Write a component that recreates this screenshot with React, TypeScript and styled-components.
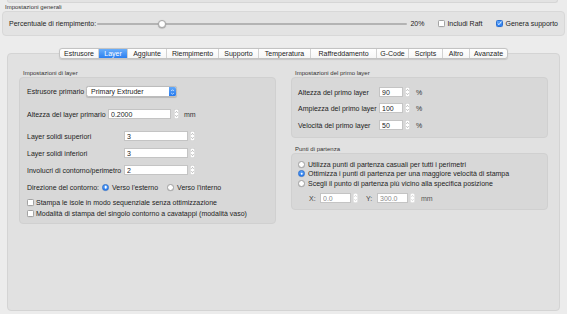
import React from 'react'
import styled, { createGlobalStyle } from 'styled-components'

const GlobalStyle = createGlobalStyle`
  html, body {
    margin: 0;
    padding: 0;
    background: #ececec;
  }
  body {
    font-family: 'Liberation Sans', Arial, sans-serif;
  }
`

const Window = styled.div`
  width: 567px;
  height: 314px;
  display: flex;
  flex-direction: column;
  background: #ececec;
  color: #1d1d1d;
  font-size: 7px;
  line-height: 9px;
  overflow: hidden;
`

const PrevGroupEdge = styled.div`
  height: 2px;
  margin: 0 9px 0 7px;
  background: #e3e3e3;
  border: 1px solid #d6d6d6;
  border-top: none;
  border-radius: 0 0 3px 3px;
`

const SectionTitle = styled.div<{ $mt?: number }>`
  font-size: 6px;
  line-height: 7px;
  height: 7px;
  margin: ${p => p.$mt ?? 1}px 0 0 5px;
  color: #333;
  white-space: nowrap;
`

const GeneralBox = styled.div`
  height: 25px;
  box-sizing: border-box;
  margin: 0 2px;
  display: flex;
  align-items: center;
  padding: 0 6px;
  background: #e3e3e3;
  border: 1px solid #d8d8d8;
  border-radius: 4px;
`

const Text = styled.span<{ $ml?: number; $muted?: boolean }>`
  margin-left: ${p => p.$ml ?? 0}px;
  white-space: nowrap;
  color: ${p => (p.$muted ? '#555' : 'inherit')};
`

const Track = styled.div`
  position: relative;
  width: 315px;
  height: 2px;
  margin-left: 1px;
  background: #b3b3b3;
  border-radius: 1px;
`

const Thumb = styled.div<{ $pct: number }>`
  position: absolute;
  top: 50%;
  left: calc(4px + ${p => p.$pct / 100} * (100% - 8px));
  width: 8px;
  height: 8px;
  box-sizing: border-box;
  border-radius: 50%;
  background: #fff;
  border: 0.5px solid #a6a6a6;
  box-shadow: 0 0.5px 1px rgba(0, 0, 0, 0.3);
  transform: translate(-50%, -50%);
`

const CheckItem = styled.label<{ $ml?: number }>`
  display: flex;
  align-items: center;
  gap: 2px;
  margin-left: ${p => p.$ml ?? 0}px;
  white-space: nowrap;
`

const Box = styled.span<{ $on?: boolean }>`
  display: inline-flex;
  align-items: center;
  justify-content: center;
  width: 7px;
  height: 7px;
  box-sizing: border-box;
  border-radius: 1.5px;
  background: ${p => (p.$on ? 'linear-gradient(#5ba3f8, #2a7cf0)' : '#fff')};
  border: 0.5px solid ${p => (p.$on ? '#2a6fd0' : '#a3a3a3')};
  box-shadow: 0 0.3px 0.6px rgba(0, 0, 0, 0.15);
  flex-shrink: 0;
`

const TabBar = styled.div`
  align-self: center;
  display: flex;
  position: relative;
  z-index: 1;
  height: 9px;
  margin: 12px 0 -6px;
  border: 1px solid #c3c3c3;
  border-radius: 3px;
  background: linear-gradient(#ffffff, #f6f6f6);
  box-shadow: 0 0.5px 1px rgba(0, 0, 0, 0.12);
  overflow: hidden;
`

const Tab = styled.div<{ $w: number; $active?: boolean }>`
  width: ${p => p.$w}px;
  box-sizing: border-box;
  text-align: center;
  line-height: 9px;
  white-space: nowrap;
  color: ${p => (p.$active ? '#fff' : '#1d1d1d')};
  background: ${p => (p.$active ? 'linear-gradient(#6aaefa, #2b7ff1)' : 'transparent')};
  & + & {
    border-left: 1px solid #d2d2d2;
  }
`

const Panel = styled.div`
  flex: 1;
  margin: 0 7px 3px;
  padding: 16px 11px 0;
  display: grid;
  grid-template-columns: 257px 257px;
  column-gap: 15px;
  align-items: start;
  background: #e1e1e1;
  border: 1px solid #d4d4d4;
  border-radius: 4px;
`

const Column = styled.div`
  display: flex;
  flex-direction: column;
`

const GroupTitle = styled.div<{ $mt?: number }>`
  font-size: 6px;
  line-height: 7px;
  height: 7px;
  margin: ${p => p.$mt ?? 0}px 0 0 4px;
  color: #333;
  white-space: nowrap;
`

const GroupBox = styled.div<{ $pt: number; $pb: number }>`
  display: flex;
  flex-direction: column;
  padding: ${p => p.$pt}px 0 ${p => p.$pb}px 6px;
  background: #d8d8d8;
  border: 1px solid #d0d0d0;
  border-radius: 4px;
`

const Row = styled.div<{ $h?: number; $mt?: number; $ml?: number }>`
  display: flex;
  align-items: center;
  height: ${p => p.$h ?? 10}px;
  margin-top: ${p => p.$mt ?? 0}px;
  margin-left: ${p => p.$ml ?? 0}px;
`

const FieldLabel = styled.span<{ $w?: number; $muted?: boolean }>`
  flex-shrink: 0;
  width: ${p => (p.$w ? `${p.$w}px` : 'auto')};
  white-space: nowrap;
  color: ${p => (p.$muted ? '#444' : 'inherit')};
`

const Field = styled.input<{ $w: number; $muted?: boolean }>`
  width: ${p => p.$w}px;
  height: 10px;
  box-sizing: border-box;
  margin: 0;
  padding: 0 2px;
  font: inherit;
  line-height: 8px;
  color: ${p => (p.$muted ? '#8a8a8a' : '#1d1d1d')};
  background: #fff;
  border: 0.5px solid #c4c4c4;
  outline: none;
  flex-shrink: 0;
`

const SelectBox = styled.div`
  display: flex;
  width: 91px;
  height: 11px;
  box-sizing: border-box;
  background: #fff;
  border: 0.5px solid #bcbcbc;
  border-radius: 2.5px;
  box-shadow: 0 0.5px 0.8px rgba(0, 0, 0, 0.15);
  overflow: hidden;
`

const SelectValue = styled.span`
  flex: 1;
  padding-left: 4px;
  line-height: 10px;
  white-space: nowrap;
`

const SelectCap = styled.span`
  display: flex;
  align-items: center;
  justify-content: center;
  width: 7px;
  background: linear-gradient(#63a9f9, #2479ef);
`

const StepWrap = styled.span<{ $ml?: number }>`
  display: inline-flex;
  margin-left: ${p => p.$ml ?? 2}px;
  flex-shrink: 0;
`

const Unit = styled.span<{ $ml: number; $muted?: boolean }>`
  margin-left: ${p => p.$ml}px;
  color: ${p => (p.$muted ? '#555' : '#333')};
  white-space: nowrap;
`

const Radio = styled.span<{ $on?: boolean }>`
  position: relative;
  width: 7px;
  height: 7px;
  box-sizing: border-box;
  border-radius: 50%;
  flex-shrink: 0;
  background: ${p => (p.$on ? 'linear-gradient(#5ba3f8, #2a7cf0)' : '#fff')};
  border: 0.5px solid ${p => (p.$on ? '#2a6fd0' : '#a3a3a3')};
  box-shadow: 0 0.3px 0.6px rgba(0, 0, 0, 0.15);
  &::after {
    content: '';
    display: ${p => (p.$on ? 'block' : 'none')};
    position: absolute;
    left: 50%;
    top: 50%;
    width: 2.6px;
    height: 2.6px;
    border-radius: 50%;
    background: #fff;
    transform: translate(-50%, -50%);
  }
`

const RadioItem = styled.span<{ $ml?: number }>`
  display: flex;
  align-items: center;
  gap: 3px;
  margin-left: ${p => p.$ml ?? 0}px;
  white-space: nowrap;
`

const Stepper = ({ muted }: { muted?: boolean }) => (
  <svg width="5" height="10" viewBox="0 0 5 10">
    <rect x="0.25" y="0.25" width="4.5" height="9.5" rx="1.6" fill="#fff" stroke={muted ? '#cfcfcf' : '#bdbdbd'} strokeWidth="0.5" />
    <path d="M1.5 3.6 L2.5 2.6 L3.5 3.6" fill="none" stroke={muted ? '#aaa' : '#666'} strokeWidth="0.6" />
    <path d="M1.5 6.4 L2.5 7.4 L3.5 6.4" fill="none" stroke={muted ? '#aaa' : '#666'} strokeWidth="0.6" />
  </svg>
)

const CheckMark = () => (
  <svg width="5" height="5" viewBox="0 0 5 5">
    <path d="M0.9 2.6 L2 3.7 L4.1 1" fill="none" stroke="#fff" strokeWidth="0.9" strokeLinecap="round" strokeLinejoin="round" />
  </svg>
)

const tabs = [
  { name: 'Estrusore', w: 38 },
  { name: 'Layer', w: 29, active: true },
  { name: 'Aggiunte', w: 39 },
  { name: 'Riempimento', w: 52 },
  { name: 'Supporto', w: 40 },
  { name: 'Temperatura', w: 52 },
  { name: 'Raffreddamento', w: 66 },
  { name: 'G-Code', w: 32 },
  { name: 'Scripts', w: 34 },
  { name: 'Altro', w: 27 },
  { name: 'Avanzate', w: 38 },
]

const firstLayer = [
  { label: 'Altezza del primo layer', value: '90', mt: 0 },
  { label: 'Ampiezza del primo layer', value: '100', mt: 6 },
  { label: 'Velocità del primo layer', value: '50', mt: 7 },
]

const seamOptions = [
  'Utilizza punti di partenza casuali per tutti i perimetri',
  'Ottimizza i punti di partenza per una maggiore velocità di stampa',
  'Scegli il punto di partenza più vicino alla specifica posizione',
]

const App: React.FC = () => {
  return (
    <>
      <GlobalStyle />
      <Window>
        <PrevGroupEdge />
        <SectionTitle>Impostazioni generali</SectionTitle>
        <GeneralBox>
          <Text>Percentuale di riempimento:</Text>
          <Track>
            <Thumb $pct={20} />
          </Track>
          <Text $ml={3}>20%</Text>
          <CheckItem $ml={14}>
            <Box />
            <span>Includi Raft</span>
          </CheckItem>
          <CheckItem $ml={14}>
            <Box $on>
              <CheckMark />
            </Box>
            <span>Genera supporto</span>
          </CheckItem>
        </GeneralBox>

        <TabBar>
          {tabs.map(t => (
            <Tab key={t.name} $w={t.w} $active={t.active}>
              {t.name}
            </Tab>
          ))}
        </TabBar>

        <Panel>
          <Column>
            <GroupTitle>Impostazioni di layer</GroupTitle>
            <GroupBox $pt={8} $pb={5}>
              <Row $h={11} $ml={1}>
                <FieldLabel $w={59}>Estrusore primario</FieldLabel>
                <SelectBox>
                  <SelectValue>Primary Extruder</SelectValue>
                  <SelectCap>
                    <svg width="5" height="8" viewBox="0 0 5 8">
                      <path d="M1.2 3 L2.5 1.7 L3.8 3" fill="none" stroke="#fff" strokeWidth="0.7" />
                      <path d="M1.2 5 L2.5 6.3 L3.8 5" fill="none" stroke="#fff" strokeWidth="0.7" />
                    </svg>
                  </SelectCap>
                </SelectBox>
              </Row>
              <Row $mt={12} $ml={1}>
                <FieldLabel $w={81}>Altezza del layer primario</FieldLabel>
                <Field $w={63} readOnly value="0.2000" />
                <StepWrap $ml={3}>
                  <Stepper />
                </StepWrap>
                <Unit $ml={5}>mm</Unit>
              </Row>
              <Row $mt={12} $ml={1}>
                <FieldLabel $w={97}>Layer solidi superiori</FieldLabel>
                <Field $w={64} readOnly value="3" />
                <StepWrap>
                  <Stepper />
                </StepWrap>
              </Row>
              <Row $mt={7} $ml={1}>
                <FieldLabel $w={97}>Layer solidi inferiori</FieldLabel>
                <Field $w={64} readOnly value="3" />
                <StepWrap>
                  <Stepper />
                </StepWrap>
              </Row>
              <Row $mt={7} $ml={1}>
                <FieldLabel $w={97}>Involucri di contorno/perimetro</FieldLabel>
                <Field $w={64} readOnly value="2" />
                <StepWrap>
                  <Stepper />
                </StepWrap>
              </Row>
              <Row $mt={7} $ml={1}>
                <FieldLabel $w={75}>Direzione del contorno:</FieldLabel>
                <RadioItem>
                  <Radio $on />
                  <span>Verso l'esterno</span>
                </RadioItem>
                <RadioItem $ml={9}>
                  <Radio />
                  <span>Verso l'interno</span>
                </RadioItem>
              </Row>
              <Row $mt={5} $ml={1}>
                <CheckItem>
                  <Box />
                  <span>Stampa le isole in modo sequenziale senza ottimizzazione</span>
                </CheckItem>
              </Row>
              <Row $mt={1} $ml={1}>
                <CheckItem>
                  <Box />
                  <span>Modalità di stampa del singolo contorno a cavatappi (modalità vaso)</span>
                </CheckItem>
              </Row>
            </GroupBox>
          </Column>

          <Column>
            <GroupTitle>Impostazioni del primo layer</GroupTitle>
            <GroupBox $pt={9} $pb={7}>
              {firstLayer.map(r => (
                <Row key={r.label} $mt={r.mt}>
                  <FieldLabel $w={81}>{r.label}</FieldLabel>
                  <Field $w={24} readOnly value={r.value} />
                  <StepWrap>
                    <Stepper />
                  </StepWrap>
                  <Unit $ml={6}>%</Unit>
                </Row>
              ))}
            </GroupBox>

            <GroupTitle $mt={8}>Punti di partenza</GroupTitle>
            <GroupBox $pt={6} $pb={6}>
              {seamOptions.map((opt, i) => (
                <Row key={opt} $h={9} $mt={i === 2 ? 1 : 0}>
                  <RadioItem>
                    <Radio $on={i === 1} />
                    <span>{opt}</span>
                  </RadioItem>
                </Row>
              ))}
              <Row $mt={5} $ml={11}>
                <FieldLabel $w={11} $muted>X:</FieldLabel>
                <Field $w={31} $muted readOnly value="0.0" />
                <StepWrap>
                  <Stepper muted />
                </StepWrap>
                <FieldLabel $w={11} $muted style={{ marginLeft: 8 }}>Y:</FieldLabel>
                <Field $w={31} $muted readOnly value="300.0" />
                <StepWrap>
                  <Stepper muted />
                </StepWrap>
                <Unit $ml={6} $muted>mm</Unit>
              </Row>
            </GroupBox>
          </Column>
        </Panel>
      </Window>
    </>
  )
}

export default App
